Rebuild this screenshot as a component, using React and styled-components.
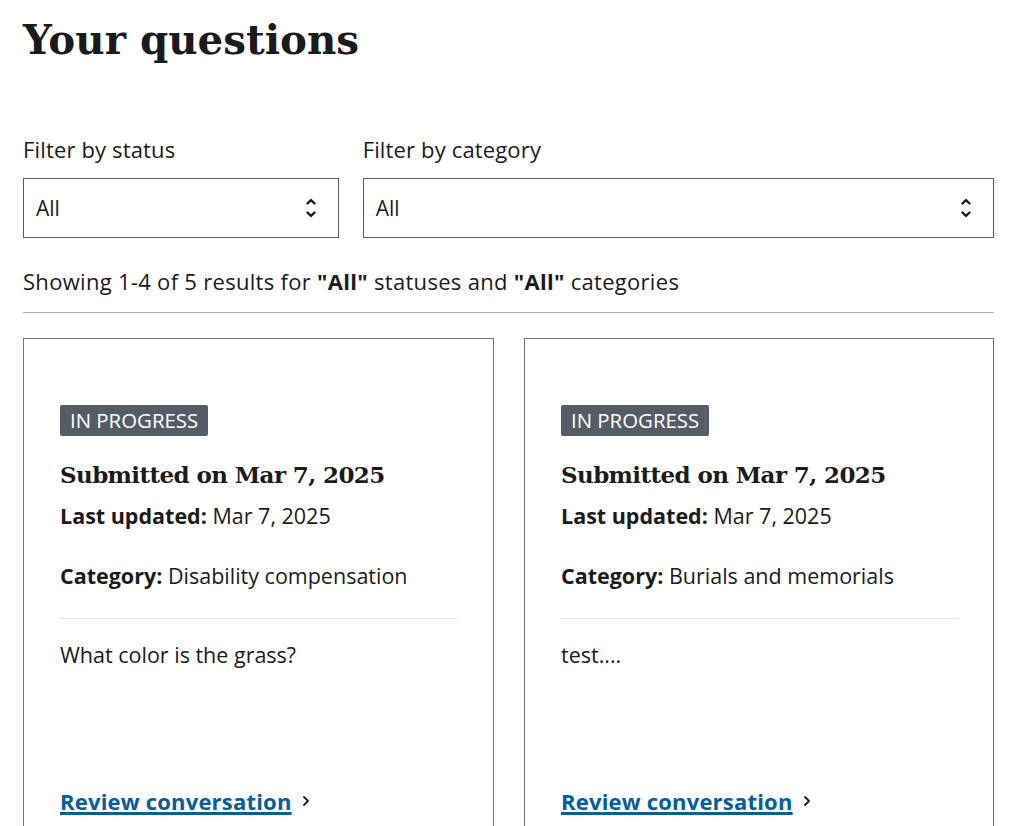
import React from "react";
import styled, { createGlobalStyle } from "styled-components";

const GlobalStyle = createGlobalStyle`
  body {
    margin: 0;
    background: #fff;
    color: #1b1b1b;
    font-family: "Open Sans", "Noto Sans", sans-serif;
  }
  * { box-sizing: border-box; }
`;

const Page = styled.div`
  width: 1017px;
  padding: 16px 23px 0;
`;

const Title = styled.h1`
  margin: 0;
  font-family: "DejaVu Serif", serif;
  font-weight: 700;
  font-size: 40.4px;
  line-height: 48px;
`;

const Filters = styled.div`
  display: grid;
  grid-template-columns: 1fr 2fr;
  gap: 24px;
  margin-top: 70px;
`;

const Field = styled.div`
  display: flex;
  flex-direction: column;
  gap: 14px;
`;

const Label = styled.label`
  font-size: 22px;
  line-height: 30px;
  letter-spacing: 0.15px;
`;

const SelectBox = styled.div`
  height: 60px;
  border: 1px solid #565c65;
  display: flex;
  align-items: center;
  justify-content: space-between;
  padding: 0 22px 0 12px;
  font-size: 21px;
`;

const Summary = styled.p`
  margin: 28px 0 0;
  font-size: 22px;
  line-height: 30px;
  letter-spacing: 0.3px;
  padding-bottom: 16px;
  border-bottom: 1px solid #a9aeb1;
`;

const CardGrid = styled.div`
  display: grid;
  grid-template-columns: 471px 470px;
  gap: 30px;
  margin-top: 25px;
`;

const Card = styled.article`
  border: 1px solid #757575;
  padding: 66px 36px 40px;
  min-height: 520px;
`;

const Tag = styled.span`
  display: inline-block;
  background: #565c65;
  color: #fff;
  font-size: 20.4px;
  line-height: 31px;
  padding: 0 10px;
  border-radius: 2px;
`;

const CardTitle = styled.h3`
  margin: 23px 0 0;
  font-family: "DejaVu Serif", serif;
  font-weight: 700;
  font-size: 23px;
  line-height: 32px;
  letter-spacing: -0.6px;
`;

const Meta = styled.p`
  margin: ${(p) => p.$gap}px 0 0;
  font-size: 21.5px;
  line-height: 30px;
  b { font-weight: 700; }
`;

const Rule = styled.hr`
  margin: 27px 0 0;
  border: 0;
  border-top: 1px solid #dfe1e2;
`;

const Question = styled.p`
  margin: 21px 0 0;
  font-size: 21.5px;
  line-height: 30px;
`;

const ReviewLink = styled.a`
  display: inline-flex;
  align-items: center;
  gap: 10px;
  margin-top: 116px;
  font-size: 22px;
  line-height: 30px;
  letter-spacing: 0.2px;
  font-weight: 700;
  color: #005ea2;
  span { text-decoration: underline; text-underline-offset: 3px; }
`;

const UpDown = () => (
  <svg width="10" height="22" viewBox="0 0 10 22" fill="none" stroke="#1b1b1b" strokeWidth="2.4" strokeLinecap="round" strokeLinejoin="round">
    <path d="M1.5 6.5 L5 3 L8.5 6.5" />
    <path d="M1.5 15.5 L5 19 L8.5 15.5" />
  </svg>
);

const Chevron = () => (
  <svg width="8" height="12" viewBox="0 0 8 12" fill="none" stroke="#1b1b1b" strokeWidth="1.8" strokeLinecap="round" strokeLinejoin="round">
    <path d="M2 2 L6 6 L2 10" />
  </svg>
);

const cards = [
  { category: "Disability compensation", question: "What color is the grass?" },
  { category: "Burials and memorials", question: "test...." },
];

export default function App() {
  return (
    <>
      <GlobalStyle />
      <Page>
        <Title>Your questions</Title>
        <Filters>
          <Field>
            <Label>Filter by status</Label>
            <SelectBox>All<UpDown /></SelectBox>
          </Field>
          <Field>
            <Label>Filter by category</Label>
            <SelectBox>All<UpDown /></SelectBox>
          </Field>
        </Filters>
        <Summary>
          Showing 1-4 of 5 results for <b>"All"</b> statuses and <b>"All"</b> categories
        </Summary>
        <CardGrid>
          {cards.map((c) => (
            <Card key={c.category}>
              <Tag>IN PROGRESS</Tag>
              <CardTitle>Submitted on Mar 7, 2025</CardTitle>
              <Meta $gap={10}><b>Last updated:</b> Mar 7, 2025</Meta>
              <Meta $gap={30}><b>Category:</b> {c.category}</Meta>
              <Rule />
              <Question>{c.question}</Question>
              <ReviewLink href="#">
                <span>Review conversation</span>
                <Chevron />
              </ReviewLink>
            </Card>
          ))}
        </CardGrid>
      </Page>
    </>
  );
}
